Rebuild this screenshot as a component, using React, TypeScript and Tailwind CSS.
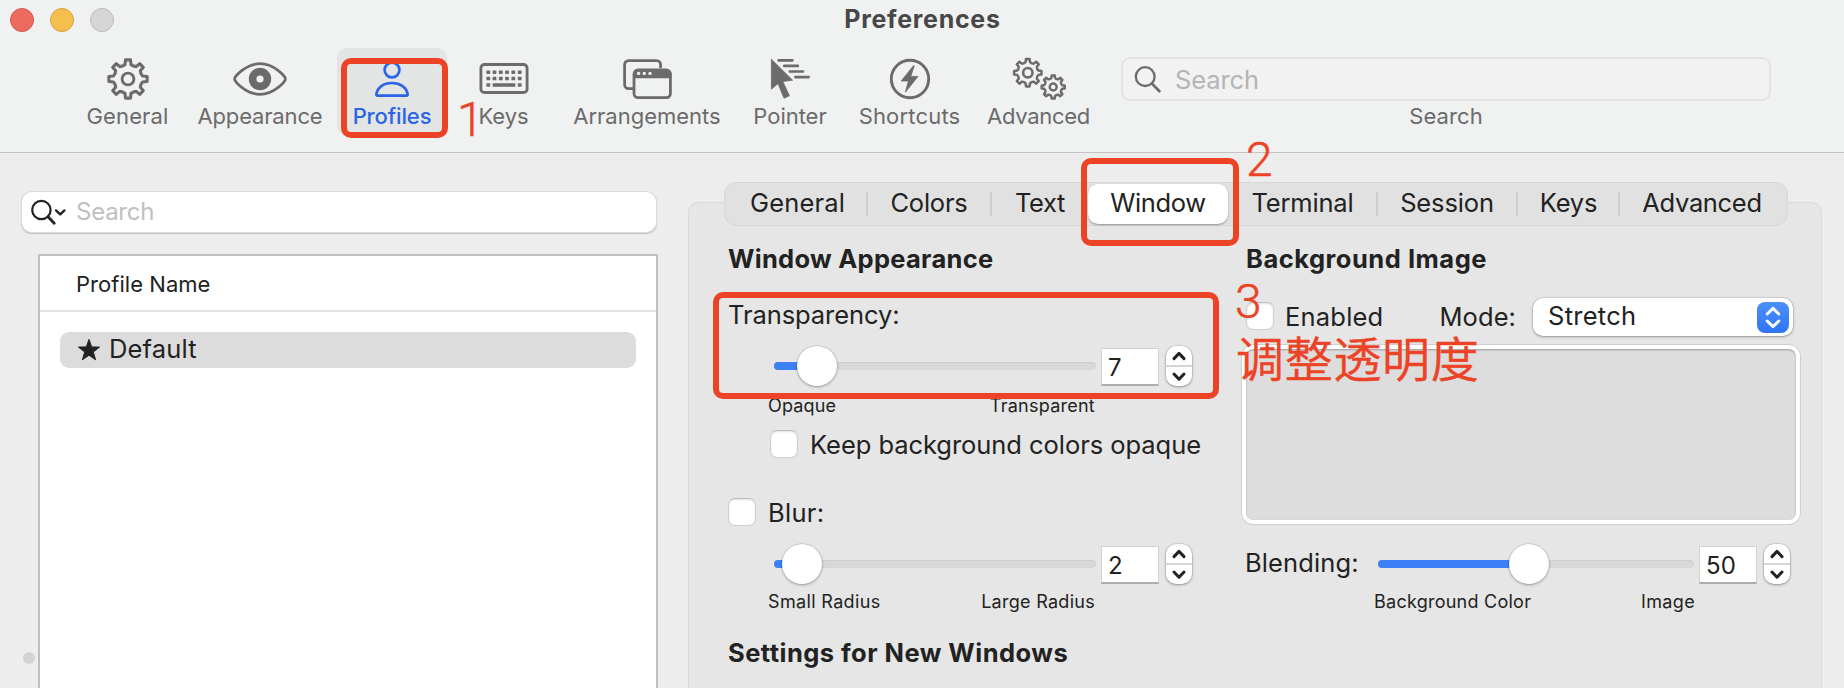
import React from "react";
import type { ReactNode } from "react";

function gearPath(cx: number, cy: number, tip: number, root: number): string {
  const teeth = 8;
  const pt = (r: number, deg: number) => {
    const a = ((deg - 90) * Math.PI) / 180;
    return `${(cx + r * Math.cos(a)).toFixed(2)} ${(cy + r * Math.sin(a)).toFixed(2)}`;
  };
  let d = "";
  for (let i = 0; i < teeth; i++) {
    const c = (i * 360) / teeth;
    d += `${i === 0 ? "M" : "L"}${pt(root + 0.6, c - 11.5)}L${pt(tip, c - 7.5)}L${pt(tip, c + 7.5)}L${pt(root + 0.6, c + 11.5)}`;
    d += `Q${pt(root - 0.7, c + 22.5)} ${pt(root + 0.6, c + 33.5)}`;
  }
  return d + "Z";
}

const GearIcon = () => (
  <svg width="44" height="44" viewBox="0 0 44 44" fill="none" stroke="currentColor" strokeLinejoin="round">
    <path d={gearPath(22, 22, 19.3, 14.2)} strokeWidth="3.1" />
    <circle cx="22" cy="22" r="5.9" strokeWidth="2.9" />
  </svg>
);

const EyeIcon = () => (
  <svg width="56" height="44" viewBox="0 0 56 44" fill="none">
    <path
      d="M2.6 22C2.6 19.4 14 6.7 28 6.7S53.4 19.4 53.4 22 42 37.3 28 37.3 2.6 24.6 2.6 22Z"
      stroke="currentColor"
      strokeWidth="2.7"
    />
    <circle cx="28" cy="22" r="7.4" stroke="currentColor" strokeWidth="7.6" />
  </svg>
);

const PersonIcon = () => (
  <svg width="44" height="44" viewBox="0 0 44 44" fill="none" stroke="currentColor" strokeWidth="2.7">
    <circle cx="22" cy="13" r="7.4" />
    <path d="M7.6 38.6H36.4Q37.8 38.6 37.6 37C36.6 30.4 30.4 26 22 26S7.4 30.4 6.4 37Q6.2 38.6 7.6 38.6Z" strokeLinejoin="round" />
  </svg>
);

const KeyboardIcon = () => (
  <svg width="50" height="44" viewBox="0 0 50 44" fill="none">
    <rect x="1.9" y="7.5" width="46.2" height="28" rx="3.6" stroke="currentColor" strokeWidth="2.8" />
    <g fill="currentColor">
      {[13.4, 19.8].map((y) =>
        [7.4, 13.6, 19.9, 26.1, 32.4, 38.8].map((x) => <rect key={`${x}-${y}`} x={x} y={y} width="3.8" height="3.5" rx="0.6" />),
      )}
      <rect x="7.4" y="26.2" width="3.8" height="3.5" rx="0.6" />
      <rect x="13.6" y="26.2" width="22.8" height="3.5" rx="0.6" />
      <rect x="38.8" y="26.2" width="3.8" height="3.5" rx="0.6" />
    </g>
  </svg>
);

const WindowsIcon = () => (
  <svg width="52" height="44" viewBox="0 0 52 44" fill="none">
    <path
      d="M13 31.6H7.6A4 4 0 0 1 3.6 27.6V7.6A4 4 0 0 1 7.6 3.6H35.6A4 4 0 0 1 39.6 7.6V11"
      stroke="currentColor"
      strokeWidth="2.8"
    />
    <rect x="13" y="13" width="36.4" height="27.6" rx="4" stroke="currentColor" strokeWidth="2.8" />
    <path d="M12 21.2V17A5 5 0 0 1 17 12H45.4A5 5 0 0 1 50.4 17V21.2Z" fill="currentColor" />
    <g fill="#f0f0f0">
      <circle cx="17.6" cy="16.4" r="1.7" />
      <circle cx="23.3" cy="16.4" r="1.7" />
      <circle cx="29" cy="16.4" r="1.7" />
    </g>
  </svg>
);

const PointerIcon = () => (
  <svg width="44" height="44" viewBox="0 0 44 44">
    <path d="M3.4 2.2L24.6 23.2 14.8 24.4 21.4 38.8 16 41.2 10 26.6 3.4 32.2Z" fill="currentColor" stroke="currentColor" strokeWidth="0.8" strokeLinejoin="round" />
    <g stroke="currentColor" strokeWidth="2.7" strokeLinecap="round">
      <path d="M10.6 3.3H24.4M16.2 8.9H29.8M21.8 14.5H35M27.4 20.1H40.6" />
    </g>
  </svg>
);

const BoltIcon = () => (
  <svg width="44" height="44" viewBox="0 0 44 44">
    <circle cx="22" cy="22" r="18.7" fill="none" stroke="currentColor" strokeWidth="2.9" />
    <path d="M25.6 8.6L13.2 24H20.4L17.4 35.2 30 19.4H22.8L26.2 8.9Z" fill="currentColor" stroke="currentColor" strokeWidth="0.8" strokeLinejoin="round" />
  </svg>
);

const GearsIcon = () => (
  <svg width="56" height="44" viewBox="0 0 56 44" fill="none" stroke="currentColor" strokeWidth="2.5" strokeLinejoin="round">
    <path d={gearPath(16.8, 15.7, 13.8, 10.3)} />
    <circle cx="16.8" cy="15.7" r="4.7" strokeWidth="2.6" />
    <path d={gearPath(42.2, 30, 11.6, 8.7)} />
    <circle cx="42.2" cy="30" r="3.5" strokeWidth="2.4" />
  </svg>
);

function ToolItem({ icon, label, className }: { icon: ReactNode; label: string; className: string }) {
  return (
    <div className={`flex h-[88px] shrink-0 flex-col items-center ${className}`}>
      <div className="flex h-[54px] items-center pt-2">{icon}</div>
      <div className="text-[22px] leading-7">{label}</div>
    </div>
  );
}

function Toolbar() {
  return (
    <div className="flex pl-[72px] pt-[8px] text-[#6b6b6b]">
      <ToolItem className="w-[111px] tracking-[0.13px]" icon={<GearIcon />} label="General" />
      <ToolItem className="w-[154px] tracking-[-0.15px]" icon={<EyeIcon />} label="Appearance" />
      <ToolItem className="w-[110px] rounded-[11px] bg-[#e3e4e4] font-medium tracking-[-0.13px] text-[#2a65e7]" icon={<PersonIcon />} label="Profiles" />
      <ToolItem className="w-[113px] tracking-[-0.09px]" icon={<KeyboardIcon />} label="Keys" />
      <ToolItem className="w-[174px]" icon={<WindowsIcon />} label="Arrangements" />
      <ToolItem className="w-[112px] tracking-[-0.04px]" icon={<PointerIcon />} label="Pointer" />
      <ToolItem className="w-[127px] tracking-[0.18px]" icon={<BoltIcon />} label="Shortcuts" />
      <ToolItem className="w-[131px] tracking-[-0.3px]" icon={<GearsIcon />} label="Advanced" />
      <ToolItem
        className="ml-[17px] w-[650px] tracking-[0.1px]"
        label="Search"
        icon={
          <div className="flex h-11 w-[650px] items-center rounded-[9px] border-2 border-[#e2e3e3] bg-[#f1f2f1] pl-[10px]">
            <svg width="30" height="30" viewBox="0 0 30 30" fill="none" stroke="#6b6b6b" strokeWidth="2.3" strokeLinecap="round">
              <circle cx="12.2" cy="12.6" r="9.4" />
              <path d="M19 19.6L26.4 27.2" strokeWidth="2.7" />
            </svg>
            <span className="ml-3 pt-[2px] text-[25.5px] leading-9 tracking-[-0.11px] text-[#b5b5b5]">Search</span>
          </div>
        }
      />
    </div>
  );
}

function Sidebar() {
  return (
    <div className="relative flex w-[688px] shrink-0 flex-col pl-[22px] pt-[39px]">
      <div className="flex h-10 w-[634px] items-center rounded-[10px] bg-white pl-2 shadow-[0_0_0_1px_#dcdcdc,0_1px_1px_1px_#bdbdbd]">
        <svg width="38" height="30" viewBox="0 0 38 30" fill="none" stroke="#222" strokeWidth="2.2" strokeLinecap="round">
          <circle cx="11.4" cy="13" r="9.2" />
          <path d="M18 19.8L24.2 26.2" strokeWidth="2.8" />
          <path d="M26 13.4L30.2 17.4 34.4 13.4" strokeWidth="2.4" strokeLinejoin="round" />
        </svg>
        <span className="ml-[8px] text-[24px] leading-9 tracking-[-0.25px] text-[#bfbfbf]">Search</span>
      </div>
      <div className="ml-4 mt-[22px] flex w-[620px] flex-1 flex-col border-2 border-b-0 border-[#bfbfbf] bg-white">
        <div className="flex h-[56px] items-center border-b-2 border-[#e3e3e3] pl-9 pt-[2px] text-[22px] leading-7 tracking-[0.04px]">
          Profile Name
        </div>
        <div className="mx-5 mt-5 flex h-9 items-center rounded-[9px] bg-[#dcdcdc] pl-[17px]">
          <svg width="24" height="24" viewBox="0 0 24 24" fill="#222" stroke="#222" strokeWidth="1" strokeLinejoin="round">
            <path d="M12 1.4L14.7 8.9 22.6 9.1 16.3 14 18.6 21.8 12 17.2 5.4 21.8 7.7 14 1.4 9.1 9.3 8.9Z" />
          </svg>
          <span className="ml-[8px] pb-[3px] text-[25.5px] leading-8 tracking-[0.17px]">Default</span>
        </div>
      </div>
      <div className="absolute left-[23px] top-[499px] size-3 rounded-full bg-[#d3d3d3]" />
    </div>
  );
}

function Tab({ label, className, sep, active }: { label: string; className: string; sep?: boolean; active?: boolean }) {
  return (
    <div
      className={`flex h-10 shrink-0 items-center ${active ? "rounded-[10px] bg-white shadow-[0_1px_2px_rgba(0,0,0,0.35)]" : ""} ${className}`}
    >
      <span className="flex-1 pb-[2px] text-center text-[25.5px] leading-9">{label}</span>
      {sep && <span className="h-6 w-[2px] bg-[#cecfce]" />}
    </div>
  );
}

function Tabs() {
  return (
    <div className="relative z-10 ml-9 flex h-11 w-[1064px] items-center rounded-[12px] border border-[#d6d7d6] bg-[#e0e1e0] pl-[3px]">
      <Tab className="w-[140px] pl-px tracking-[0.14px]" label="General" sep />
      <Tab className="w-[124px] tracking-[-0.2px]" label="Colors" sep />
      <Tab className="w-[96px] tracking-[-0.35px]" label="Text" />
      <Tab className="w-[140px] tracking-[-0.33px]" label="Window" active />
      <Tab className="ml-px w-[149px] tracking-[-0.18px]" label="Terminal" sep />
      <Tab className="w-[140px] tracking-[-0.14px]" label="Session" sep />
      <Tab className="w-[102px] pl-px tracking-[-0.25px]" label="Keys" sep />
      <Tab className="w-[164px] tracking-[-0.33px]" label="Advanced" />
    </div>
  );
}

const Checkbox = () => (
  <span className="size-7 shrink-0 rounded-[7px] border border-[#cfcfcf] border-t-[#bdbdbd] bg-white shadow-[inset_0_1px_2px_rgba(0,0,0,0.12)]" />
);

function Slider({ value, thumb, width }: { value: string; thumb: number; width: string }) {
  return (
    <div className="flex h-[42px] items-center">
      <div className={`relative flex h-2 items-center rounded-full bg-[#d8d8d8] shadow-[inset_0_1px_1px_rgba(0,0,0,0.06)] ${width}`}>
        <div className="h-2 rounded-l-full bg-[#3b80f7]" style={{ width: thumb }} />
        <div
          className="absolute top-[-16px] size-10 rounded-full bg-white shadow-[0_0_0_0.5px_rgba(0,0,0,0.15),0_1px_3px_rgba(0,0,0,0.3)]"
          style={{ left: thumb - 20 }}
        />
      </div>
      <div className="ml-[5px] mt-px flex h-[38px] w-[58px] items-center border border-[#d2d2d2] border-b-2 border-b-[#adadad] bg-white pl-[6px] text-[24px] leading-8 tracking-[0.2px]">
        <span className="pt-[3px]">{value}</span>
      </div>
      <div className="ml-[7px] flex h-10 w-[26px] flex-col rounded-[10px] bg-white shadow-[0_0_0_0.5px_rgba(0,0,0,0.15),0_1px_3px_rgba(0,0,0,0.3)]">
        <svg width="26" height="40" viewBox="0 0 26 40" fill="none" stroke="#222" strokeWidth="3" strokeLinecap="round" strokeLinejoin="round">
          <path d="M8 12.6L13 7.4 18 12.6M8 28L13 33.2 18 28" />
          <path d="M0 20H26" stroke="#d6d6d6" strokeWidth="2" strokeLinecap="butt" />
        </svg>
      </div>
    </div>
  );
}

function WindowAppearance() {
  return (
    <div className="w-[518px] shrink-0 text-[25.5px]">
      <div className="font-bold leading-9 tracking-[0.28px]">Window Appearance</div>
      <div className="mt-[20px] leading-9 tracking-[-0.08px]">Transparency:</div>
      <div className="ml-[46px] mt-[12px]">
        <Slider value="7" thumb={43} width="w-[322px]" />
      </div>
      <div className="ml-[40px] mt-[7px] flex w-[327px] justify-between text-[18px] leading-6">
        <span className="tracking-[0.15px]">Opaque</span>
        <span className="tracking-[0.25px]">Transparent</span>
      </div>
      <div className="ml-[42px] mt-3 flex h-7 items-center">
        <Checkbox />
        <span className="ml-[12px] pt-[2px] leading-9 tracking-[-0.05px]">Keep background colors opaque</span>
      </div>
      <div className="mt-10 flex h-7 items-center">
        <Checkbox />
        <span className="ml-[12px] pt-[2px] leading-9 tracking-[0.3px]">Blur:</span>
      </div>
      <div className="ml-[46px] mt-[17px]">
        <Slider value="2" thumb={28} width="w-[322px]" />
      </div>
      <div className="ml-[40px] mt-[5px] flex w-[327px] justify-between text-[18px] leading-6">
        <span className="tracking-[0.35px]">Small Radius</span>
        <span className="tracking-[0.28px]">Large Radius</span>
      </div>
      <div className="mt-[21px] font-bold leading-9 tracking-[0.46px]">Settings for New Windows</div>
    </div>
  );
}

function BackgroundImage() {
  return (
    <div className="w-[560px] shrink-0 text-[25.5px]">
      <div className="font-bold leading-9 tracking-[0.51px]">Background Image</div>
      <div className="mt-5 flex h-10 items-center">
        <div className="mb-[2px] flex">
          <Checkbox />
        </div>
        <span className="ml-[11px] leading-9 tracking-[0.2px]">Enabled</span>
        <span className="ml-[56px] leading-9 tracking-[0.1px]">Mode:</span>
        <div className="ml-[17px] flex h-[38px] w-[260px] items-center justify-between rounded-[10px] bg-white pl-[15px] pr-1 shadow-[0_0_0_0.5px_rgba(0,0,0,0.15),0_1px_3px_rgba(0,0,0,0.3)]">
          <span className="pb-[2px] leading-9 tracking-[0.27px]">Stretch</span>
          <span className="flex h-[31px] w-8 rounded-[8px] bg-linear-to-b from-[#4a90f9] to-[#2f74f6]">
            <svg width="32" height="31" viewBox="0 0 32 31" fill="none" stroke="#fff" strokeWidth="2.9" strokeLinecap="round" strokeLinejoin="round">
              <path d="M10.2 12L16 6.4 21.8 12M10.2 19L16 24.6 21.8 19" />
            </svg>
          </span>
        </div>
      </div>
      <div className="-ml-[4px] mt-[8px] h-[179px] w-[558px] rounded-[11px] border-4 border-white bg-[#dddddd] shadow-[0_0_0_0.5px_rgba(0,0,0,0.2),inset_0_1px_2px_rgba(0,0,0,0.3)]" />
      <div className="mt-[19px] flex items-center">
        <span className="-ml-px w-[133px] pb-[3px] leading-9 tracking-[0.12px]">Blending:</span>
        <Slider value="50" thumb={151} width="w-[316px]" />
      </div>
      <div className="ml-[128px] mt-[5px] flex w-[321px] justify-between text-[18px] leading-6">
        <span className="tracking-[0.25px]">Background Color</span>
        <span className="tracking-[0.35px]">Image</span>
      </div>
    </div>
  );
}

function Annotations() {
  return (
    <div className="pointer-events-none absolute inset-0 z-20 font-['Roboto',sans-serif] text-[48px] font-light leading-none text-[#ec4226] [-webkit-text-stroke:0.5px_#ec4226]">
      <div className="absolute left-[341px] top-[58px] h-[80px] w-[107px] rounded-[10px] border-6 border-[#ec4226]" />
      <div className="absolute left-[1081px] top-[158px] h-[88px] w-[158px] rounded-[10px] border-6 border-[#ec4226]" />
      <div className="absolute left-[713px] top-[292px] h-[107px] w-[506px] rounded-[10px] border-6 border-[#ec4226]" />
      <div className="absolute left-[457px] top-[96px]">1</div>
      <div className="absolute left-[1246px] top-[136px]">2</div>
      <div className="absolute left-[1235px] top-[278px]">3</div>
      <div className="absolute left-[1236px] top-[332px] whitespace-nowrap font-['Noto_Sans_CJK_SC',sans-serif] font-[350] tracking-[0.7px]">调整透明度</div>
    </div>
  );
}

export default function App() {
  return (
    <div className="relative flex h-[688px] w-[1844px] flex-col overflow-hidden bg-[#ecedec] font-['Inter',sans-serif] text-[#222222]">
      <header className="h-[153px] shrink-0 border-b border-[#c3c3c3] bg-[#f0f1f1]">
        <div className="grid h-10 grid-cols-[1fr_auto_1fr]">
          <div className="flex gap-4 pl-[10px] pt-2">
            <span className="size-6 rounded-full border border-[#d8554a] bg-[#ed6a5f]" />
            <span className="size-6 rounded-full border border-[#dba13a] bg-[#f5bf4f]" />
            <span className="size-6 rounded-full border border-[#bcbcbc] bg-[#d6d6d6]" />
          </div>
          <div className="pl-px text-[25px] font-bold leading-[38px] tracking-[0.7px] text-[#474747]">Preferences</div>
        </div>
        <Toolbar />
      </header>
      <div className="flex flex-1">
        <Sidebar />
        <main className="flex flex-1 flex-col pt-[29px]">
          <Tabs />
          <section className="-mt-6 flex w-[1134px] flex-1 rounded-t-[11px] border border-b-0 border-[#d9dad9] bg-[#e5e6e5] pl-[39px] pt-[38px]">
            <WindowAppearance />
            <BackgroundImage />
          </section>
        </main>
      </div>
      <Annotations />
    </div>
  );
}
